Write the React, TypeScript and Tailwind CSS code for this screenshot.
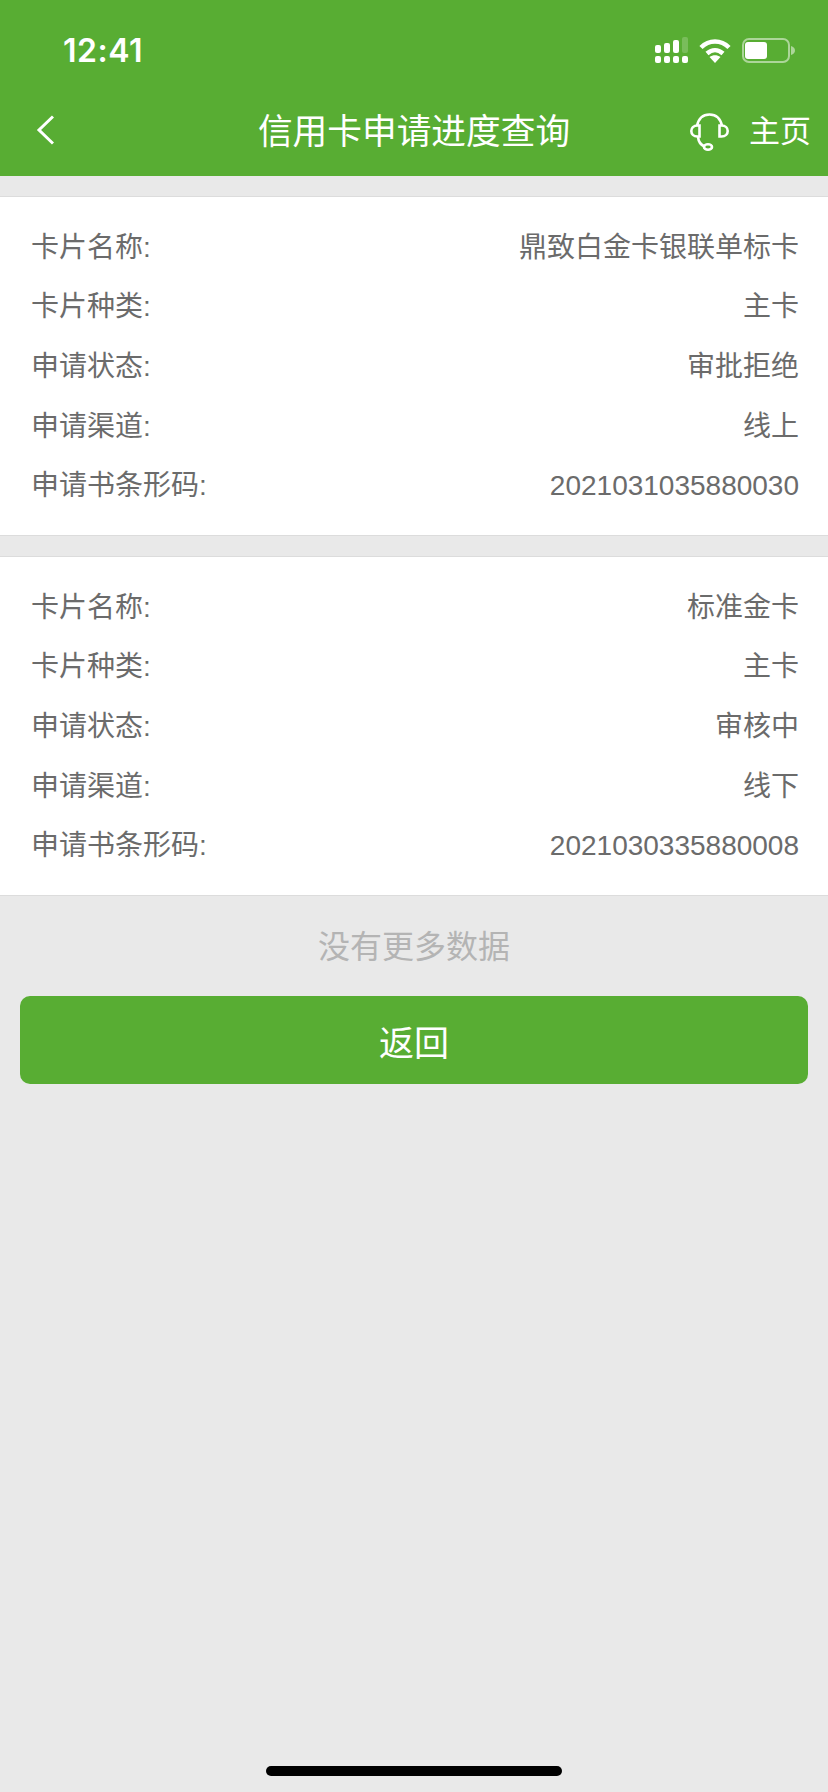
const font = "font-['Liberation_Sans','Noto_Sans_CJK_SC',sans-serif]"

const cards = [
  [
    ['卡片名称:', '鼎致白金卡银联单标卡'],
    ['卡片种类:', '主卡'],
    ['申请状态:', '审批拒绝'],
    ['申请渠道:', '线上'],
    ['申请书条形码:', '2021031035880030'],
  ],
  [
    ['卡片名称:', '标准金卡'],
    ['卡片种类:', '主卡'],
    ['申请状态:', '审核中'],
    ['申请渠道:', '线下'],
    ['申请书条形码:', '2021030335880008'],
  ],
]

function SignalIcon() {
  return (
    <svg width="33" height="26" viewBox="0 0 33 26" fill="white">
      <rect x="0" y="8" width="6" height="8" rx="2" />
      <rect x="9" y="6" width="6" height="10" rx="2" />
      <rect x="18" y="3" width="6" height="13" rx="2" />
      <rect x="27" y="0" width="6" height="16" rx="2" opacity="0.2" />
      <rect x="0" y="19" width="6" height="7" rx="2" />
      <rect x="9" y="19" width="6" height="7" rx="2" />
      <rect x="18" y="19" width="6" height="7" rx="2" />
      <rect x="27" y="19" width="6" height="7" rx="2" />
    </svg>
  )
}

function WifiIcon() {
  return (
    <svg width="32" height="25" viewBox="0 0 32 25" fill="none" stroke="white" strokeWidth="4.500">
      <path d="M2 9.500C10 1.500 22 1.500 30 9.500" />
      <path d="M8 15.500c5-4.500 11-4.500 16 0" />
      <path d="M10.500 19c3.500-2.500 7.500-2.500 11 0L16 25Z" fill="white" stroke="none" />
    </svg>
  )
}

function BatteryIcon() {
  return (
    <svg width="53" height="25" viewBox="0 0 53 25" fill="none">
      <rect x="1" y="1" width="46" height="23" rx="6" stroke="white" strokeOpacity="0.5" strokeWidth="2" />
      <rect x="3" y="4" width="22" height="17" rx="3" fill="white" />
      <path d="M49 8c2.500.7 4 2.500 4 4.500s-1.500 3.800-4 4.500Z" fill="white" fillOpacity="0.5" />
    </svg>
  )
}

function HeadsetIcon() {
  return (
    <svg width="39" height="38" viewBox="0 0 39 38" fill="none" stroke="white" strokeWidth="2.600">
      <path d="M7 13C8.500 5.500 13 1.500 19.500 1.500S30.500 5.500 32 13" />
      <path d="M9.500 12.500H7.500C3.500 12.500 1.300 15 1.300 18S3.500 23.500 7.500 23.500H9.500Z" />
      <path d="M29.500 12.500h2c4 0 6.200 2.500 6.200 5.500s-2.200 5.500-6.200 5.500h-2Z" />
      <path d="M8 24c.5 4.500 3 8 6.500 9.500" />
      <ellipse cx="18" cy="34" rx="4" ry="2.700" />
    </svg>
  )
}

export default function App() {
  return (
    <div className={`${font} min-h-[1792px] w-[828px] bg-[#e9e9e9] flex flex-col`}>
      <header className="h-[176px] bg-[#58ad33] text-white flex flex-col">
        <div className="h-[88px] pt-[29px] pl-[63px] pr-[33px] flex justify-between items-start">
          <span className="font-['Inter'] text-[32px] leading-[44px] font-semibold tracking-[0.5px]">12:41</span>
          <div className="flex items-center gap-[11px] pt-[8px]">
            <SignalIcon />
            <WifiIcon />
            <BatteryIcon />
          </div>
        </div>
        <div className="h-[88px] grid grid-cols-[1fr_auto_1fr] items-center px-[17px]">
          <svg className="ml-[19px] mb-[5px]" width="18" height="30" viewBox="0 0 18 30" fill="none" stroke="white" strokeWidth="3">
            <path d="M17 1.500 3 15l14 13.500" />
          </svg>
          <span className="text-[34.700px] leading-[52px]">信用卡申请进度查询</span>
          <div className="flex items-center justify-end gap-[20px]">
            <HeadsetIcon />
            <span className="text-[31px] leading-[44px]">主页</span>
          </div>
        </div>
      </header>

      <main className="flex flex-col pt-[20px]">
        {cards.map((rows, i) => (
          <section key={i} className="mb-[20px] h-[340px] bg-white border-y border-[#dcdcdc] pl-[31px] pr-[29px] pt-[21px] pb-[19px] flex flex-col">
            {rows.map(([label, value]) => (
              <div key={label} className="h-[60px] flex items-center justify-between text-[28px] text-[#6b6b6b]">
                <span>{label}</span>
                <span>{value}</span>
              </div>
            ))}
          </section>
        ))}
        <p className="mt-[6px] text-center text-[32px] leading-[50px] text-[#b4b4b4]">没有更多数据</p>
        <button className="mx-[20px] mt-[24px] h-[88px] pt-[9px] rounded-[10px] bg-[#58ad33] text-white text-[35px] text-center">返回</button>
      </main>

      <div className="mt-auto h-[26px] flex justify-center">
        <div className="h-[10px] w-[296px] rounded-full bg-black" />
      </div>
    </div>
  )
}
